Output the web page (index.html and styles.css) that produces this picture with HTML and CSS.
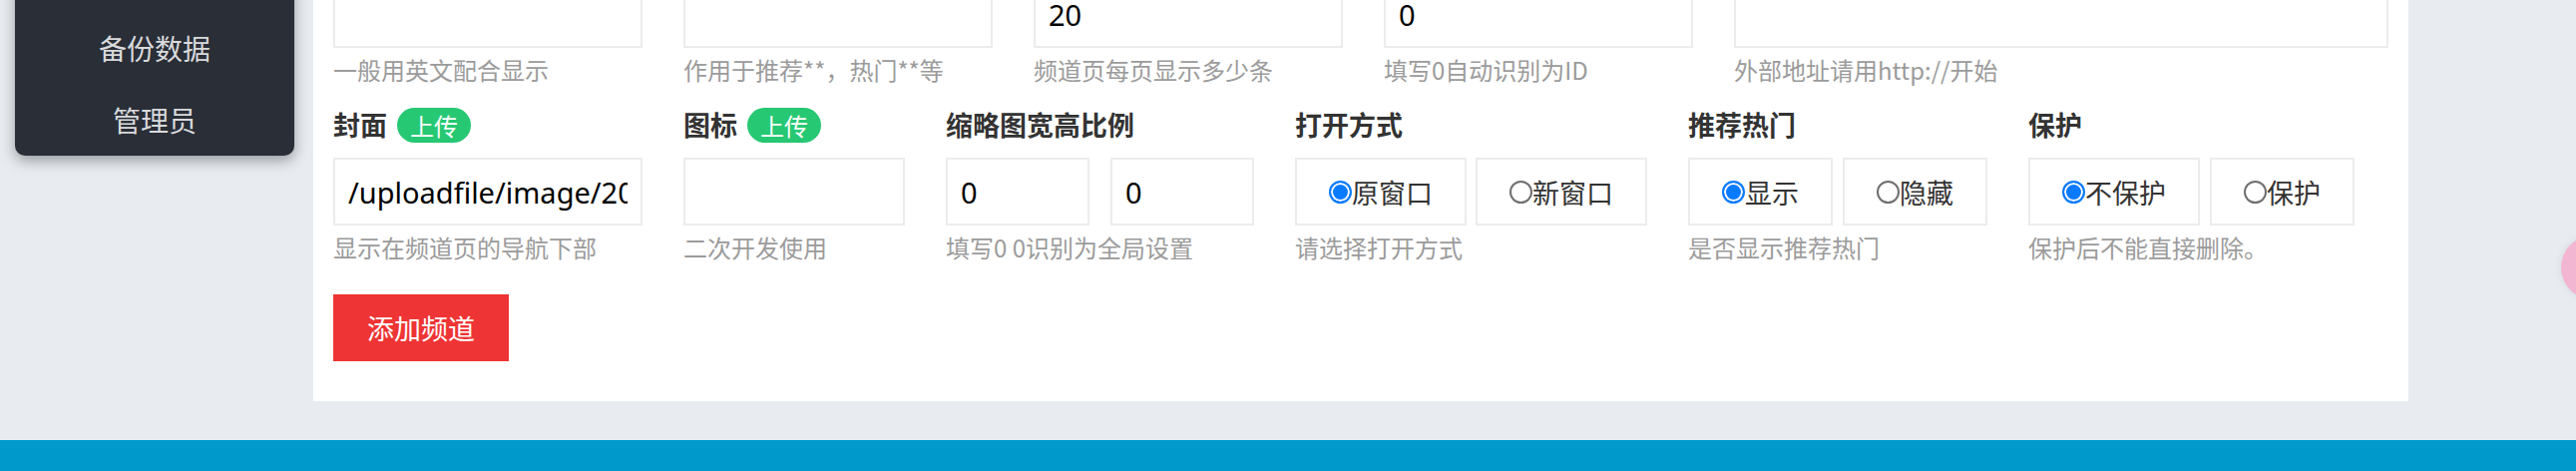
FILE: index.html
```html
<!DOCTYPE html>
<html lang="zh-CN">
<head>
<meta charset="utf-8">
<title>添加频道</title>
<link rel="stylesheet" href="styles.css">
</head>
<body>
<div class="page">
  <aside class="sidebar">
    <a class="nav-item">备份数据</a>
    <a class="nav-item">管理员</a>
  </aside>
  <main class="panel">
    <div class="form-row row-first">
      <div class="field w310">
        <input class="text-input" type="text" value="">
        <p class="hint">一般用英文配合显示</p>
      </div>
      <div class="field w310">
        <input class="text-input" type="text" value="">
        <p class="hint">作用于推荐**，热门**等</p>
      </div>
      <div class="field w310">
        <input class="text-input" type="text" value="20">
        <p class="hint">频道页每页显示多少条</p>
      </div>
      <div class="field w310">
        <input class="text-input" type="text" value="0">
        <p class="hint">填写0自动识别为ID</p>
      </div>
      <div class="field w656">
        <input class="text-input" type="text" value="">
        <p class="hint">外部地址请用http://开始</p>
      </div>
    </div>
    <div class="form-row row-second">
      <div class="field">
        <div class="label">封面 <span class="badge">上传</span></div>
        <div class="controls">
          <input class="text-input w310" type="text" value="/uploadfile/image/20240101/cover.jpg">
        </div>
        <p class="hint">显示在频道页的导航下部</p>
      </div>
      <div class="field">
        <div class="label">图标 <span class="badge">上传</span></div>
        <div class="controls">
          <input class="text-input w222" type="text" value="">
        </div>
        <p class="hint">二次开发使用</p>
      </div>
      <div class="field">
        <div class="label">缩略图宽高比例</div>
        <div class="controls gap-wide">
          <input class="text-input w144" type="text" value="0">
          <input class="text-input w144" type="text" value="0">
        </div>
        <p class="hint">填写0 0识别为全局设置</p>
      </div>
      <div class="field">
        <div class="label">打开方式</div>
        <div class="controls gap-narrow">
          <label class="radio-box"><input type="radio" name="target" checked>原窗口</label>
          <label class="radio-box"><input type="radio" name="target">新窗口</label>
        </div>
        <p class="hint">请选择打开方式</p>
      </div>
      <div class="field">
        <div class="label">推荐热门</div>
        <div class="controls">
          <label class="radio-box"><input type="radio" name="hot" checked>显示</label>
          <label class="radio-box"><input type="radio" name="hot">隐藏</label>
        </div>
        <p class="hint">是否显示推荐热门</p>
      </div>
      <div class="field">
        <div class="label">保护</div>
        <div class="controls">
          <label class="radio-box"><input type="radio" name="protect" checked>不保护</label>
          <label class="radio-box"><input type="radio" name="protect">保护</label>
        </div>
        <p class="hint">保护后不能直接删除。</p>
      </div>
    </div>
    <button class="submit" type="button">添加频道</button>
  </main>
</div>
<footer class="footer"></footer>
<div class="float-ball"></div>
</body>
</html>
```
FILE: styles.css
```css
html, body {
  margin: 0;
  padding: 0;
}
body {
  background: #e8ecf1;
  font-family: "Noto Sans CJK SC", "Noto Sans", sans-serif;
  overflow: hidden;
  width: 2582px;
  height: 472px;
  position: relative;
}
.page {
  display: flex;
  align-items: flex-start;
  margin-top: -20px;
}
.sidebar {
  width: 280px;
  margin-left: 15px;
  padding-top: 32px;
  background: #292e37;
  border-radius: 0 0 10px 10px;
  box-shadow: 0 5px 14px rgba(0, 0, 0, 0.35);
  display: flex;
  flex-direction: column;
}
.nav-item {
  display: block;
  height: 72px;
  line-height: 72px;
  text-align: center;
  font-size: 28px;
  color: #d9dadc;
}
.panel {
  margin-left: 19px;
  width: 2100px;
  box-sizing: border-box;
  background: #fff;
  padding: 0 20px 40px;
}
.form-row {
  display: flex;
  gap: 41px;
}
.row-first {
  margin-bottom: 17px;
}
.row-second {
  margin-bottom: 29px;
}
.field {
  display: flex;
  flex-direction: column;
}
.w310 { width: 310px; }
.w656 { width: 656px; }
.w222 { width: 222px; }
.w144 { width: 144px; }
.label {
  height: 40px;
  line-height: 40px;
  margin-bottom: 13px;
  font-size: 27px;
  font-weight: 700;
  color: #333;
  white-space: nowrap;
  display: flex;
  align-items: center;
  gap: 10px;
}
.badge {
  display: inline-block;
  height: 35px;
  line-height: 35px;
  padding: 0 13px;
  border-radius: 18px;
  background: #26c873;
  color: #fff;
  font-size: 24px;
  font-weight: 400;
}
.controls {
  display: flex;
  gap: 10px;
}
.controls.gap-wide {
  gap: 21px;
}
.controls.gap-narrow {
  gap: 9px;
}
.text-input {
  box-sizing: border-box;
  height: 68px;
  margin: 0;
  border: 2px solid #ececec;
  border-radius: 0;
  padding: 0 13px;
  font-family: "Noto Sans", "Noto Sans CJK SC", sans-serif;
  font-size: 29px;
  color: #000;
  background: #fff;
  outline: none;
}
.field > .text-input {
  width: 100%;
}
.hint {
  margin: 4px 0 0;
  line-height: 36px;
  font-size: 24px;
  color: #9b9b9b;
  white-space: nowrap;
}
.radio-box {
  box-sizing: border-box;
  height: 68px;
  padding: 0 32px;
  border: 2px solid #ececec;
  display: flex;
  align-items: center;
  font-size: 27px;
  color: #333;
  white-space: nowrap;
}
.radio-box input {
  -webkit-appearance: none;
  appearance: none;
  box-sizing: border-box;
  width: 23px;
  height: 23px;
  margin: 0;
  border-radius: 50%;
  border: 2px solid #6f6f6f;
  background: #fff;
  flex: none;
}
.radio-box input:checked {
  border: 2px solid #0a7bff;
  background: #0a7bff;
  box-shadow: inset 0 0 0 2px #fff;
}
.submit {
  display: block;
  height: 67px;
  padding: 0 34px;
  border: 0;
  margin: 0;
  background: #ee3434;
  color: #fff;
  font-family: "Noto Sans CJK SC", sans-serif;
  font-size: 27px;
}
.footer {
  margin-top: 39px;
  height: 60px;
  background: #0099cb;
}
.float-ball {
  position: absolute;
  left: 2567px;
  top: 236px;
  width: 64px;
  height: 64px;
  border-radius: 50%;
  background: #f2b5d2;
  box-shadow: 0 0 10px rgba(0, 0, 0, 0.08);
}
```
